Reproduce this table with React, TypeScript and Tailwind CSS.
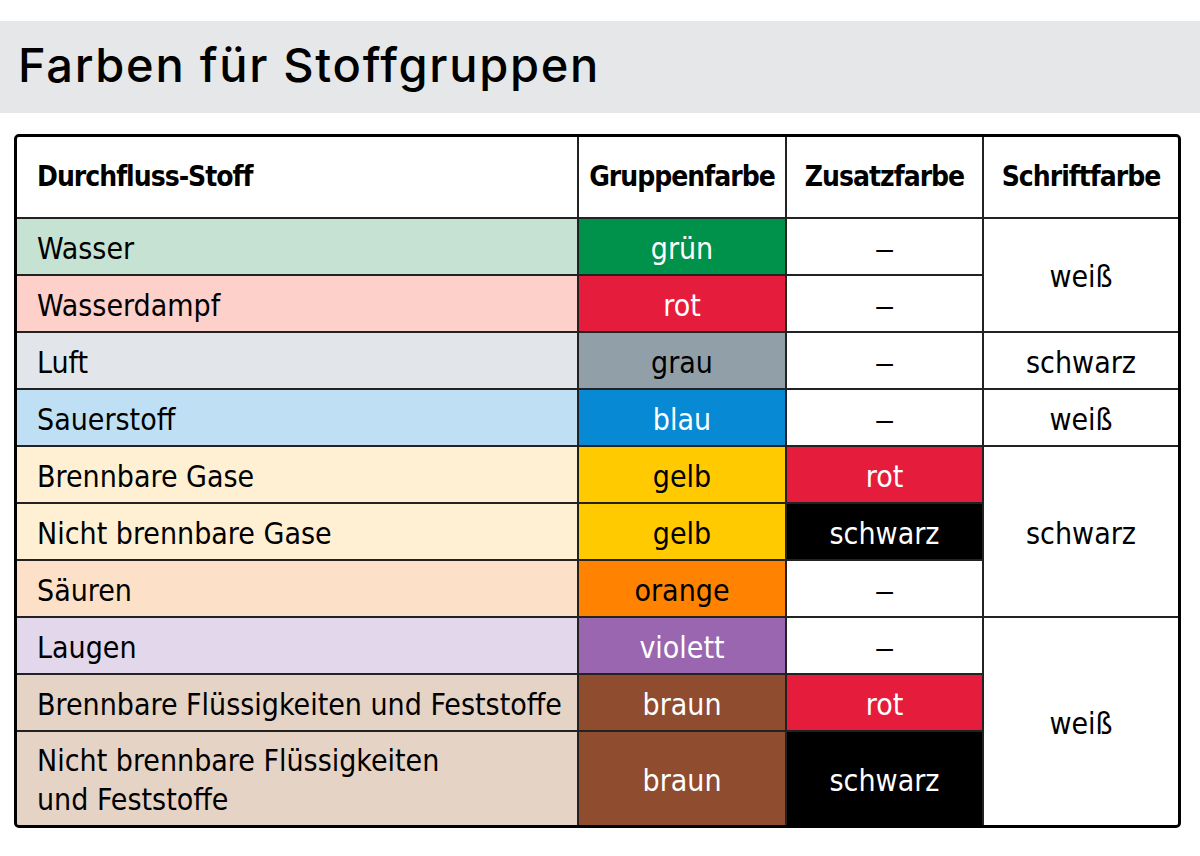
import React from 'react';

type Row = {
  name: React.ReactNode;
  light: string;
  group: string;
  groupBg: string;
  groupText: string;
  extra?: { label: string; bg: string; text: string };
};

const ROWS: Row[] = [
  { name: 'Wasser', light: 'bg-[#c6e2d3]', group: 'grün', groupBg: 'bg-[#00914a]', groupText: 'text-white' },
  { name: 'Wasserdampf', light: 'bg-[#fdd0ca]', group: 'rot', groupBg: 'bg-[#e61c3d]', groupText: 'text-white' },
  { name: 'Luft', light: 'bg-[#e2e6ea]', group: 'grau', groupBg: 'bg-[#919fa8]', groupText: 'text-black' },
  { name: 'Sauerstoff', light: 'bg-[#bfe0f4]', group: 'blau', groupBg: 'bg-[#0789d3]', groupText: 'text-white' },
  {
    name: 'Brennbare Gase', light: 'bg-[#fff0d4]', group: 'gelb', groupBg: 'bg-[#ffcb00]', groupText: 'text-black',
    extra: { label: 'rot', bg: 'bg-[#e61c3d]', text: 'text-white' },
  },
  {
    name: 'Nicht brennbare Gase', light: 'bg-[#fff0d4]', group: 'gelb', groupBg: 'bg-[#ffcb00]', groupText: 'text-black',
    extra: { label: 'schwarz', bg: 'bg-black', text: 'text-white' },
  },
  { name: 'Säuren', light: 'bg-[#fde0c8]', group: 'orange', groupBg: 'bg-[#ff8300]', groupText: 'text-black' },
  { name: 'Laugen', light: 'bg-[#e3d7ec]', group: 'violett', groupBg: 'bg-[#9a66b0]', groupText: 'text-white' },
  {
    name: 'Brennbare Flüssigkeiten und Feststoffe', light: 'bg-[#e5d3c6]', group: 'braun', groupBg: 'bg-[#8f4c2f]', groupText: 'text-white',
    extra: { label: 'rot', bg: 'bg-[#e61c3d]', text: 'text-white' },
  },
  {
    name: (
      <>
        Nicht brennbare Flüssigkeiten
        <br />
        und Feststoffe
      </>
    ),
    light: 'bg-[#e5d3c6]', group: 'braun', groupBg: 'bg-[#8f4c2f]', groupText: 'text-white',
    extra: { label: 'schwarz', bg: 'bg-black', text: 'text-white' },
  },
];

// Schriftfarbe column: merged cells
const FONT_COLOR = [
  { label: 'weiß', cls: 'row-start-2 row-span-2' },
  { label: 'schwarz', cls: 'row-start-4 row-span-1' },
  { label: 'weiß', cls: 'row-start-5 row-span-1' },
  { label: 'schwarz', cls: 'row-start-6 row-span-3' },
  { label: 'weiß', cls: 'row-start-9 row-span-3' },
];

const ROW_START = [
  'row-start-2', 'row-start-3', 'row-start-4', 'row-start-5', 'row-start-6',
  'row-start-7', 'row-start-8', 'row-start-9', 'row-start-10', 'row-start-11',
];

const cellFont = "font-['DejaVu_Sans_Condensed','DejaVu_Sans',sans-serif]";
const headCell = 'bg-white flex items-center font-bold text-[28px] tracking-[-1px]';

export default function App() {
  return (
    <div className="w-[1200px] h-[856px] bg-white pt-[21px]">
      <div className="h-[92px] bg-[#e6e7e8] flex items-center pl-[18px]">
        <h1 className="font-['Inter',sans-serif] font-medium text-[47px] tracking-[1.7px] text-black leading-none pb-[6px]">
          Farben für Stoffgruppen
        </h1>
      </div>

      <div className="ml-[14px] mt-[21px] w-[1167px] border-[3px] border-black rounded-[5px] overflow-hidden">
        <div
          className={`grid grid-cols-[560px_206px_195px_194px] grid-rows-[80px_repeat(9,55px)_93px] gap-[2px] bg-[#222] text-[30px] text-black ${cellFont}`}
        >
          {/* header */}
          <div className={`col-start-1 row-start-1 pl-[20px] ${headCell}`}>Durchfluss-Stoff</div>
          <div className={`col-start-2 row-start-1 justify-center ${headCell}`}>Gruppenfarbe</div>
          <div className={`col-start-3 row-start-1 justify-center ${headCell}`}>Zusatzfarbe</div>
          <div className={`col-start-4 row-start-1 justify-center ${headCell}`}>Schriftfarbe</div>

          {ROWS.map((r, i) => (
            <React.Fragment key={i}>
              <div className={`col-start-1 ${ROW_START[i]} ${r.light} flex items-center pl-[20px] pt-[3px] leading-[39px]`}>
                <span>{r.name}</span>
              </div>
              <div className={`col-start-2 ${ROW_START[i]} ${r.groupBg} ${r.groupText} flex items-center justify-center pt-[3px]`}>
                {r.group}
              </div>
              {r.extra ? (
                <div className={`col-start-3 ${ROW_START[i]} ${r.extra.bg} ${r.extra.text} flex items-center justify-center pt-[3px]`}>
                  {r.extra.label}
                </div>
              ) : (
                <div className={`col-start-3 ${ROW_START[i]} bg-white flex items-center justify-center pt-[3px] font-['Liberation_Sans',sans-serif]`}>
                  –
                </div>
              )}
            </React.Fragment>
          ))}

          {FONT_COLOR.map((f, i) => (
            <div key={i} className={`col-start-4 ${f.cls} bg-white flex items-center justify-center pt-[3px]`}>
              {f.label}
            </div>
          ))}
        </div>
      </div>
    </div>
  );
}
